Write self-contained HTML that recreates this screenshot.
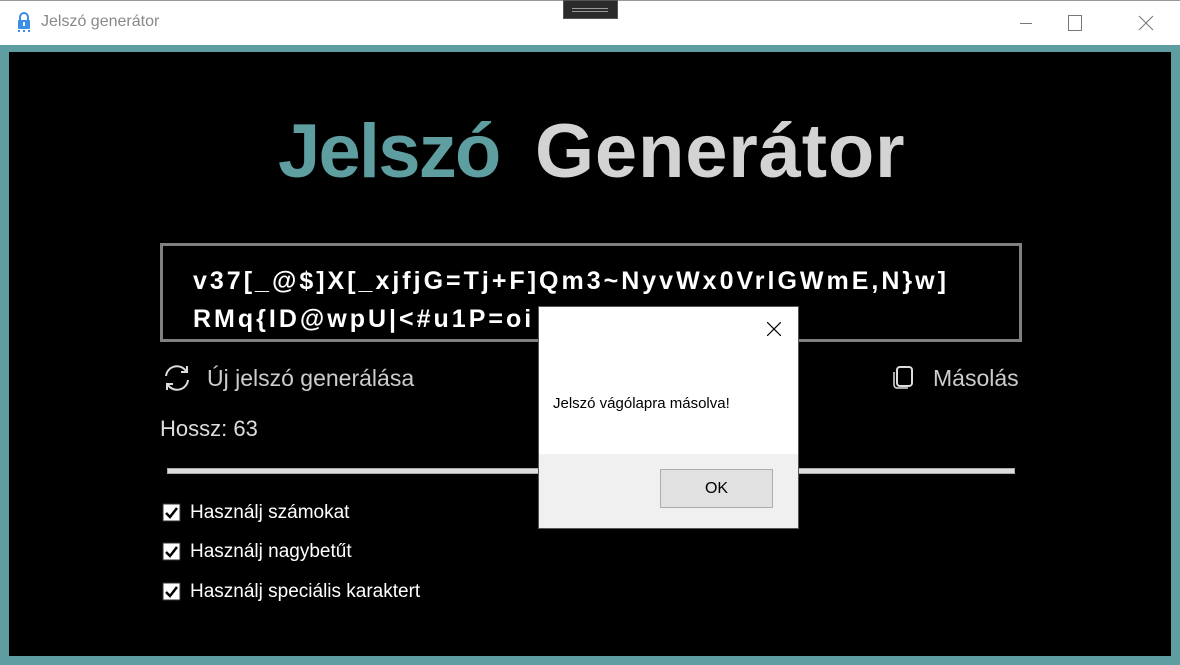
<!DOCTYPE html>
<html><head><meta charset="utf-8"><style>
*{margin:0;padding:0;box-sizing:border-box}
body{width:1180px;height:665px;position:relative;overflow:hidden;background:#fff;font-family:"Liberation Sans",sans-serif}
.a{position:absolute;white-space:nowrap}
</style></head><body>
<div class="a" style="left:0;top:0;width:1180px;height:1px;background:#999"></div>
<div class="a" style="left:563px;top:0;width:55px;height:19px;background:#2b2b2b;border:1px solid #555"></div>
<div class="a" style="left:572px;top:8px;width:36px;height:1px;background:#999"></div>
<div class="a" style="left:572px;top:11px;width:36px;height:1px;background:#999"></div>
<svg class="a" style="left:16px;top:11px" width="16" height="22" viewBox="0 0 16 22"><path d="M4 9V6a4 4 0 0 1 8 0v3" fill="none" stroke="#3a8ee6" stroke-width="2"/><rect x="2" y="9" width="12" height="9" rx="1" fill="#3a8ee6"/><rect x="7" y="11" width="2" height="4" fill="#fff"/><rect x="2" y="19" width="2" height="2" fill="#3a8ee6"/><rect x="7" y="19" width="2" height="2" fill="#3a8ee6"/><rect x="12" y="19" width="2" height="2" fill="#3a8ee6"/></svg>
<div class="a" style="left:41px;top:13px;font-size:16px;color:#888">Jelszó generátor</div>
<div class="a" style="left:1020px;top:23px;width:12px;height:1px;background:#777"></div>
<div class="a" style="left:1068px;top:15px;width:14px;height:16px;border:1px solid #777"></div>
<svg class="a" style="left:1138px;top:15px" width="16" height="16"><path d="M1 1L15 15M15 1L1 15" stroke="#777" stroke-width="1"/></svg>
<div class="a" style="left:0;top:45px;width:1180px;height:620px;background:#5f9ea0"></div>
<div class="a" style="left:9px;top:52px;width:1162px;height:604px;background:#000"></div>
<div class="a" style="left:278px;top:108px;font-size:76px;font-weight:bold;color:#5f9ea0;letter-spacing:-1.8px">Jelszó</div>
<div class="a" style="left:535px;top:108px;font-size:76px;font-weight:bold;color:#d3d3d3;letter-spacing:0.8px">Generátor</div>
<div class="a" style="left:160px;top:243px;width:862px;height:99px;border:3px solid #808080"></div>
<div class="a" style="left:193px;top:262px;font-size:25px;font-weight:bold;color:#fff;line-height:38px;letter-spacing:3px">v37[_@$]X[_xjfjG=Tj+F]Qm3~NyvWx0VrlGWmE,N}w]<br>RMq{ID@wpU|&lt;#u1P=oi</div>
<svg class="a" style="left:161px;top:364px" width="32" height="28" viewBox="0 0 32 28"><path d="M5 12a11 11 0 0 1 20-5M27 16a11 11 0 0 1-20 5" fill="none" stroke="#ddd" stroke-width="2"/><path d="M26 2v6h-6M6 26v-6h6" fill="none" stroke="#ddd" stroke-width="2"/></svg>
<div class="a" style="left:207px;top:365px;font-size:23px;color:#ccc">Új jelszó generálása</div>
<svg class="a" style="left:892px;top:366px" width="24" height="24"><rect x="5" y="1" width="15" height="19" rx="3" fill="none" stroke="#ddd" stroke-width="2"/><path d="M2 6v13a3 3 0 0 0 3 3h11" fill="none" stroke="#ddd" stroke-width="1.5"/></svg>
<div class="a" style="left:933px;top:365px;font-size:23px;color:#ccc">Másolás</div>
<div class="a" style="left:160px;top:416px;font-size:22px;color:#ddd">Hossz: 63</div>
<div class="a" style="left:167px;top:468px;width:848px;height:6px;background:#ddd;border:1px solid #aaa"></div>
<div class="a" style="left:162px;top:503px;line-height:0"><svg width="19" height="19"><rect x="1" y="1" width="17" height="17" fill="#fff" stroke="#333"/><path d="M4 10l4 4 7-9" fill="none" stroke="#000" stroke-width="2.5"/></svg></div>
<div class="a" style="left:190px;top:502px;font-size:19px;color:#fff">Használj számokat</div>
<div class="a" style="left:162px;top:542px;line-height:0"><svg width="19" height="19"><rect x="1" y="1" width="17" height="17" fill="#fff" stroke="#333"/><path d="M4 10l4 4 7-9" fill="none" stroke="#000" stroke-width="2.5"/></svg></div>
<div class="a" style="left:190px;top:541px;font-size:19px;color:#fff">Használj nagybetűt</div>
<div class="a" style="left:162px;top:582px;line-height:0"><svg width="19" height="19"><rect x="1" y="1" width="17" height="17" fill="#fff" stroke="#333"/><path d="M4 10l4 4 7-9" fill="none" stroke="#000" stroke-width="2.5"/></svg></div>
<div class="a" style="left:190px;top:581px;font-size:19px;color:#fff">Használj speciális karaktert</div>
<div class="a" style="left:538px;top:306px;width:261px;height:223px;background:#fff;border:1px solid #555"></div>
<div class="a" style="left:539px;top:454px;width:259px;height:74px;background:#f0f0f0"></div>
<svg class="a" style="left:767px;top:322px" width="14" height="14"><path d="M0 0L14 14M14 0L0 14" stroke="#000" stroke-width="1.2"/></svg>
<div class="a" style="left:553px;top:395px;font-size:15px;color:#000">Jelszó vágólapra másolva!</div>
<div class="a" style="left:660px;top:469px;width:113px;height:39px;background:#e1e1e1;border:1px solid #adadad;font-size:16px;text-align:center;line-height:37px;color:#000">OK</div>
</body></html>
